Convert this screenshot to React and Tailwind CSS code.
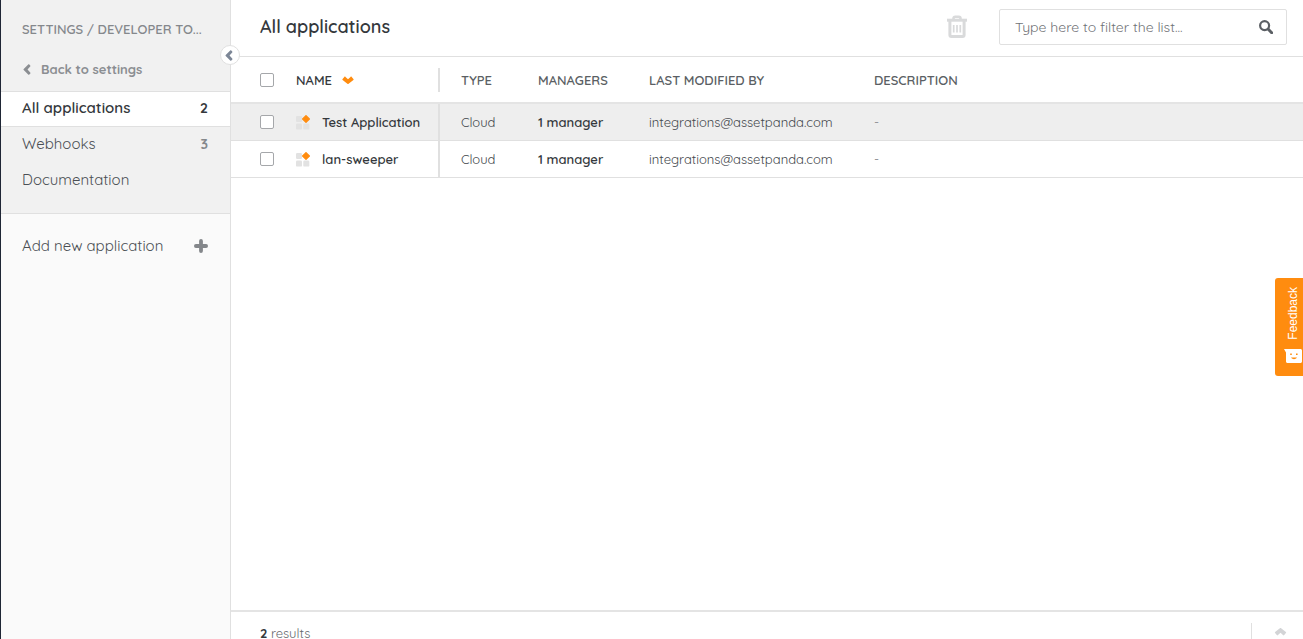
import React, { useState } from 'react';

const applications = [
  { id: 1, name: 'Test Application', type: 'Cloud', managers: '1 manager', modifiedBy: 'integrations@assetpanda.com' },
  { id: 2, name: 'lan-sweeper', type: 'Cloud', managers: '1 manager', modifiedBy: 'integrations@assetpanda.com' },
];

const menuItems = [
  { key: 'applications', label: 'All applications', count: 2 },
  { key: 'webhooks', label: 'Webhooks', count: 3 },
  { key: 'documentation', label: 'Documentation' },
];

const Chevron = ({ className }) => (
  <svg viewBox="0 0 12 8" className={className} fill="currentColor" aria-hidden="true">
    <path d="M.6 2.9 2.3.9c.4-.4.8-.4 1.2 0L6 3.3 8.5.9c.4-.4.8-.4 1.2 0l1.7 2c.4.4.4.8 0 1.2L6.6 7.7c-.4.3-.8.3-1.2 0L.6 4.1C.2 3.7.2 3.3.6 2.9Z" />
  </svg>
);

const ChevronLeft = ({ className }) => (
  <svg viewBox="0 0 8 12" className={className} fill="currentColor" aria-hidden="true">
    <path d="M5.3.5.4 5.4c-.4.4-.4.8 0 1.2l4.9 4.9c.4.4.8.4 1.2 0l1-1c.4-.4.4-.8 0-1.2L4.6 6l2.9-3.3c.4-.4.4-.8 0-1.2l-1-1C6.1.1 5.7.1 5.3.5Z" />
  </svg>
);

const PlusIcon = () => (
  <svg viewBox="0 0 14 14" className="h-[14px] w-[14px] text-[#84878b]" stroke="currentColor" strokeWidth="3.8" strokeLinecap="round" aria-hidden="true">
    <path d="M7 1.9v10.2M1.9 7h10.2" />
  </svg>
);

const SearchIcon = () => (
  <svg viewBox="0 0 14 14" className="h-[14px] w-[14px] text-[#5b5f64]" fill="none" stroke="currentColor" aria-hidden="true">
    <circle cx="5.6" cy="5.6" r="4.5" strokeWidth="2.2" />
    <path d="m9.3 9.3 3.4 3.4" strokeWidth="3" strokeLinecap="round" />
  </svg>
);

const TrashIcon = () => (
  <svg viewBox="0 0 20 24" className="h-6 w-5" fill="none" stroke="currentColor" aria-hidden="true">
    <path d="M0 5.2h20" strokeWidth="3" />
    <path d="M6.5 4.5V3.4c0-1 .7-1.7 1.7-1.7h3.6c1 0 1.7.7 1.7 1.7v1.1" strokeWidth="2.6" />
    <path d="M2.9 6v14c0 .8.6 1.4 1.4 1.4h11.4c.8 0 1.4-.6 1.4-1.4V6" strokeWidth="3" />
    <path d="M6.7 10v7.5M10 10v7.5M13.3 10v7.5" strokeWidth="1.7" />
  </svg>
);

const AppIcon = () => (
  <svg viewBox="0 0 14 15" className="h-[15px] w-[14px] shrink-0" aria-hidden="true">
    <g fill="#e2e2e2">
      <rect x="0" y="1" width="6" height="6" rx="1.2" />
      <rect x="0" y="8.6" width="6" height="6" rx="1.2" />
      <rect x="7.3" y="8.6" width="6" height="6" rx="1.2" />
    </g>
    <path d="M10 .6 13.4 4 10 7.4 6.6 4Z" fill="#ff8c0f" stroke="#ff8c0f" strokeWidth="1.2" strokeLinejoin="round" />
  </svg>
);

const FeedbackIcon = () => (
  <svg viewBox="0 0 18 14" className="h-[14px] w-[18px]" aria-hidden="true">
    <path d="M0 0h16.5c.8 0 1.5.7 1.5 1.5v11c0 .8-.7 1.5-1.5 1.5h-13c-.8 0-1.5-.7-1.5-1.5V3.5Z" fill="#fff" />
    <path d="M6.2 4.5h1.6v1.6H6.2zM12 4.5h1.6v1.6H12z" fill="#ff8c0f" />
    <path d="M7 8.5c1.5 2.3 4.5 2.3 6 0Z" fill="#ff8c0f" />
  </svg>
);

const Checkbox = ({ label, checked, onChange }) => (
  <input
    type="checkbox"
    aria-label={label}
    checked={checked}
    onChange={onChange}
    className="block h-[14px] w-[14px] appearance-none rounded-[2px] border border-[#a5a7aa] bg-white checked:bg-[#ff8c0f]"
  />
);

const App = () => {
  const [activeItem, setActiveItem] = useState('applications');
  const [filter, setFilter] = useState('');
  const [selected, setSelected] = useState([]);

  const rows = applications.filter((app) => app.name.toLowerCase().includes(filter.toLowerCase()));
  const allSelected = rows.length > 0 && rows.every((app) => selected.includes(app.id));

  const toggleRow = (id) => {
    setSelected(selected.includes(id) ? selected.filter((item) => item !== id) : [...selected, id]);
  };

  const toggleAll = () => {
    setSelected(allSelected ? [] : rows.map((app) => app.id));
  };

  return (
    <div className="flex h-screen bg-white font-['Quicksand','Lato',sans-serif] text-[#34383c]">
      {/* Sidebar */}
      <aside className="relative flex w-[231px] shrink-0 flex-col border-r border-l border-r-[#e0e0e0] border-l-[#1f2635] bg-[#fafafa]">
        <div className="border-b border-[#e0e0e0] bg-[#f1f1f1] pb-[14px]">
          <h2 className="truncate pt-[19px] pr-6 pl-[21px] text-[13px] leading-5 font-semibold text-[#85888c]">
            SETTINGS / DEVELOPER TO...
          </h2>
          <a href="#settings" className="mt-5 mb-3 flex items-center gap-[10px] pl-[22px] text-[13px] leading-5 font-bold text-[#8b8e92]">
            <ChevronLeft className="h-[11px] w-2" /> Back to settings
          </a>
          <nav>
            {menuItems.map(({ key, label, count }) => (
              <button
                key={key}
                onClick={() => setActiveItem(key)}
                className={`flex h-9 w-full items-center justify-between border-y pr-[22px] pb-[2px] pl-[21px] text-left text-[15px] leading-5 ${
                  activeItem === key
                    ? 'border-[#e0e0e0] bg-white font-semibold text-[#34383c]'
                    : 'border-transparent text-[#4b4f54]'
                }`}
              >
                <span>{label}</span>
                {count && (
                  <span className={activeItem === key ? 'text-sm font-bold' : 'text-sm font-bold text-[#85888c]'}>
                    {count}
                  </span>
                )}
              </button>
            ))}
          </nav>
        </div>
        <button className="mt-[22px] flex items-center justify-between pr-[22px] pl-[21px] text-[15px] leading-5 text-[#4b4f54]">
          <span>Add new application</span>
          <PlusIcon />
        </button>
        <button
          aria-label="Collapse menu"
          className="absolute top-[45px] -right-[10px] z-10 flex h-5 w-5 items-center justify-center rounded-full border border-[#e0e0e0] bg-white pr-[2px] text-[#7c8696]"
        >
          <ChevronLeft className="h-[11px] w-2" />
        </button>
      </aside>

      <main className="flex min-w-0 flex-1 flex-col">
        <header className="flex h-[57px] shrink-0 items-center border-b border-[#e0e0e0] pr-4 pb-[2px] pl-[29px]">
          <h1 className="flex-1 text-lg leading-6 font-semibold">All applications</h1>
          <button aria-label="Delete" className="mr-8 text-[#d9dadb]">
            <TrashIcon />
          </button>
          <div className="flex h-9 w-72 items-center rounded-[2px] border border-[#e0e0e0] pr-[13px] pl-[15px]">
            <input
              type="text"
              aria-label="Filter the list"
              placeholder="Type here to filter the list..."
              value={filter}
              onChange={(e) => setFilter(e.target.value)}
              className="min-w-0 flex-1 text-sm leading-5 outline-none placeholder:text-[#6f7276]"
            />
            <SearchIcon />
          </div>
        </header>

        <div className="flex-1">
          <table className="w-full table-fixed border-separate border-spacing-0 text-left text-[13px] leading-5">
            <thead>
              <tr className="h-[47px] text-[#5b5f64] [&>th]:border-b-2 [&>th]:border-[#e4e4e4] [&>th]:font-semibold">
                <th className="w-[65px] pl-[29px]">
                  <Checkbox label="Select all" checked={allSelected} onChange={toggleAll} />
                </th>
                <th className="w-36">
                  <div className="flex h-6 items-center border-r-2 border-[#e0e0e0]">
                    <button className="flex items-center gap-[10px] font-semibold text-[#34383c]">
                      NAME <Chevron className="h-2 w-3 text-[#ff8c0f]" />
                    </button>
                  </div>
                </th>
                <th className="w-[98px] pl-[21px]">TYPE</th>
                <th className="w-[111px]">MANAGERS</th>
                <th className="w-[225px]">LAST MODIFIED BY</th>
                <th>DESCRIPTION</th>
              </tr>
            </thead>
            <tbody>
              {rows.map((app) => (
                <tr key={app.id} className="h-[37px] first:bg-[#eeeeee] [&>td]:border-b [&>td]:border-[#e0e0e0]">
                  <td className="pl-[29px]">
                    <Checkbox
                      label={`Select ${app.name}`}
                      checked={selected.includes(app.id)}
                      onChange={() => toggleRow(app.id)}
                    />
                  </td>
                  <td className="border-r-2">
                    <div className="flex items-center gap-3 font-semibold">
                      <AppIcon />
                      <span className="truncate">{app.name}</span>
                    </div>
                  </td>
                  <td className="pl-[21px] text-[#44484d]">{app.type}</td>
                  <td className="font-semibold">{app.managers}</td>
                  <td className="text-[#44484d]">{app.modifiedBy}</td>
                  <td className="text-[#95979a]">-</td>
                </tr>
              ))}
            </tbody>
          </table>
        </div>

        <footer className="flex h-[29px] shrink-0 items-end justify-between border-t-2 border-[#e4e4e4] pl-[29px] text-[13px] leading-3 text-[#65686c]">
          <p>
            <span className="font-bold text-[#34383c]">{rows.length}</span> results
          </p>
          <button aria-label="Expand" className="flex h-4 items-end border-l border-[#e0e0e0] pr-4 pb-[3px] pl-[22px] text-[#d3d4d6]">
            <Chevron className="h-2 w-[13px] rotate-180" />
          </button>
        </footer>
      </main>

      <button className="fixed top-[278px] right-0 z-20 flex h-[98px] w-7 flex-col items-center justify-end gap-[9px] rounded-l-[3px] bg-[#ff8c0f] pb-[13px] pl-2 font-['Liberation_Sans',sans-serif] text-xs leading-4 text-white">
        <span className="rotate-180 [writing-mode:vertical-rl]">Feedback</span>
        <FeedbackIcon />
      </button>
    </div>
  );
};

export default App;
